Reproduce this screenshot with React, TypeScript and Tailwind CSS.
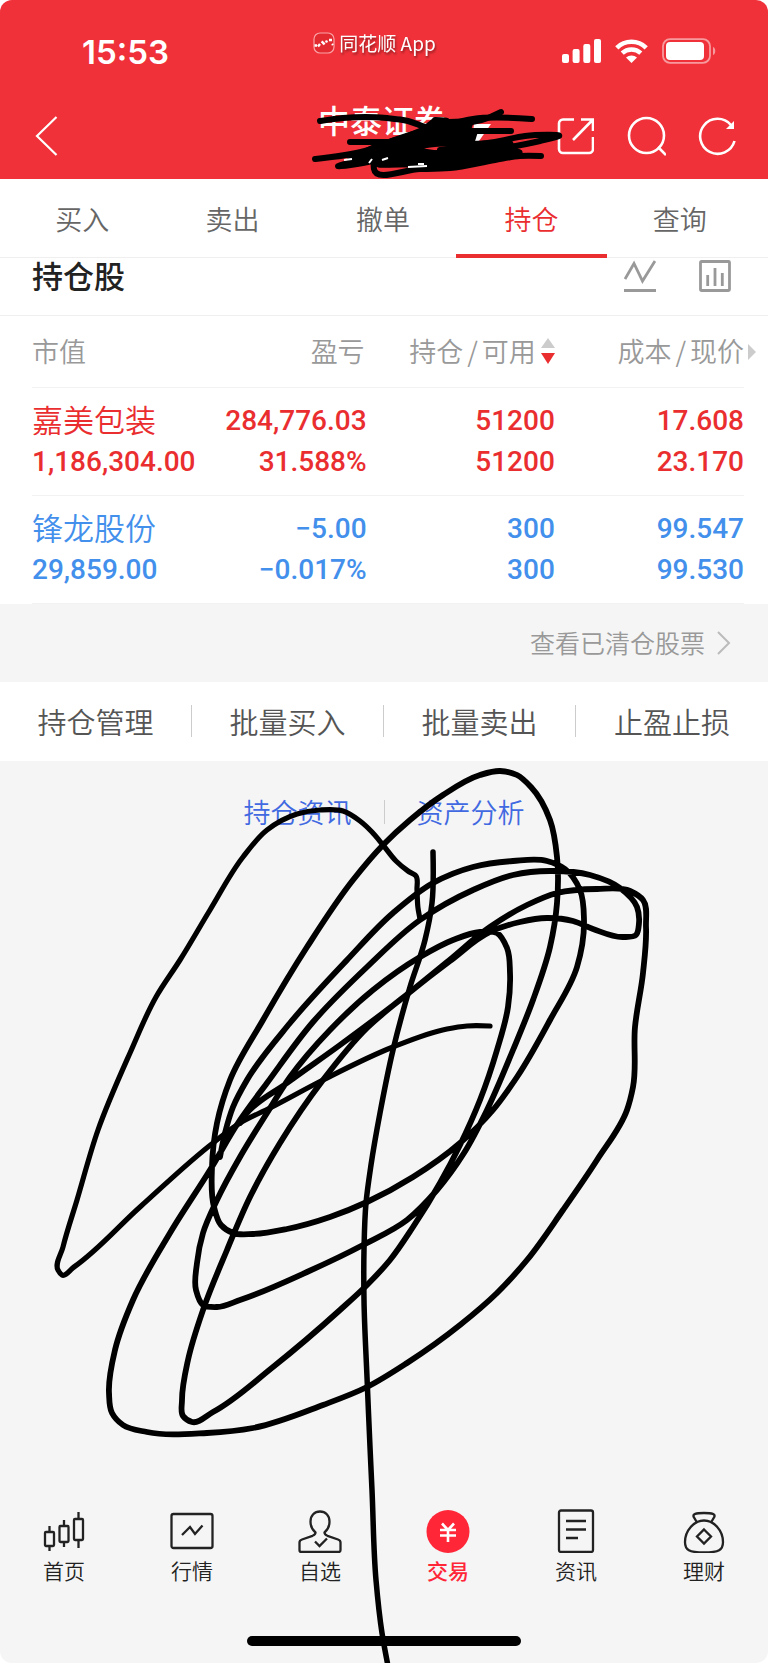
import React from "react";

type Point = [number, number];

const distance = (a: Point, b: Point) => Math.hypot(b[0] - a[0], b[1] - a[1]) || 1;

/* Direction of the pen at b, weighted by how far away its neighbours are. */
function tangent(a: Point, b: Point, c: Point): Point {
  const m = distance(a, b);
  const n = distance(b, c);
  const along = (k: 0 | 1) => (((b[k] - a[k]) / m) * n + ((c[k] - b[k]) / n) * m) / (m + n);
  return [along(0), along(1)];
}

/* Turns a list of pen positions into a smooth curve. */
function smooth(p: Point[]): string {
  let d = `M${p[0][0]} ${p[0][1]}`;
  for (let i = 0; i < p.length - 1; i++) {
    const b = p[i];
    const c = p[i + 1];
    const s = tangent(p[i - 1] ?? b, b, c);
    const e = tangent(b, c, p[i + 2] ?? c);
    const third = distance(b, c) / 3;
    d += ` C${b[0] + s[0] * third} ${b[1] + s[1] * third} ${c[0] - e[0] * third} ${c[1] - e[1] * third} ${c[0]} ${c[1]}`;
  }
  return d;
}

const tail: Point[] = [
  [433, 852], [432, 903], [425, 940], [410, 987], [393, 1050], [380, 1113], [371, 1165], [366, 1203], [364, 1250],
  [364, 1300], [367, 1377], [370, 1447], [372, 1490], [376, 1580], [382, 1633], [388, 1666],
];

const leftLobe: Point[] = [
  [420, 919], [418, 908], [417, 890], [416, 876], [408, 871], [396, 861], [383, 845], [372, 832], [360, 821], [343, 811], [320, 810],
  [297, 814], [267, 830], [243, 857], [210, 910], [180, 960], [156, 997], [130, 1053], [98, 1130], [77, 1200],
  [63, 1247], [58, 1270], [62, 1275], [74, 1267], [140, 1207], [213, 1143], [240, 1123], [270, 1108], [323, 1080],
  [393, 1047], [447, 1029], [467, 1026], [490, 1026],
];

const loops: Point[] = [
  [240, 1123], [247, 1113], [287, 1083], [340, 1045], [400, 1000], [447, 962], [490, 927], [527, 905], [557, 893],
  [597, 889], [630, 891], [643, 900], [646, 927], [643, 973], [635, 1027], [633, 1087], [627, 1110], [597, 1160],
  [563, 1210], [527, 1260], [497, 1293], [460, 1325], [407, 1363], [367, 1387], [323, 1405], [253, 1428], [207, 1433],
  [147, 1432], [123, 1425], [112, 1413], [109, 1393], [115, 1350], [133, 1300], [170, 1233], [210, 1170],
  [240, 1120], [267, 1083], [313, 1022], [367, 967], [420, 920], [473, 890], [513, 875], [550, 871], [590, 875],
  [620, 888], [637, 907], [639, 923], [636, 935], [623, 937], [593, 929], [573, 921], [547, 918], [520, 922],
  [490, 932], [450, 961], [410, 992], [367, 1028], [323, 1080], [280, 1143], [250, 1197], [227, 1250], [203, 1310],
  [188, 1360], [182, 1400], [183, 1416], [192, 1422], [213, 1412], [273, 1367], [340, 1310], [367, 1285],
  [390, 1260], [413, 1227], [440, 1183], [460, 1145], [480, 1100], [497, 1050], [508, 1007], [510, 973], [507, 948],
  [497, 933], [480, 932], [453, 940], [420, 957], [373, 990], [330, 1030], [290, 1077], [267, 1113], [240, 1157],
  [217, 1200], [203, 1233], [197, 1263], [196, 1290], [203, 1305], [217, 1307], [240, 1300], [307, 1272],
  [363, 1245], [407, 1220], [437, 1190], [464, 1153], [487, 1110], [513, 1050], [533, 1000], [550, 947], [557, 903],
  [557, 857], [550, 820], [531, 787], [517, 775], [500, 771], [480, 775], [443, 795], [410, 820], [383, 845],
  [353, 880], [307, 947], [263, 1020], [230, 1080], [217, 1123], [212, 1167], [214, 1207], [221, 1225], [233, 1233],
  [253, 1234], [287, 1229], [330, 1217], [367, 1202], [413, 1177], [460, 1143], [493, 1110], [517, 1077],
  [550, 1020], [577, 967], [584, 920], [580, 890], [565, 869], [547, 861], [513, 861], [473, 867], [433, 883],
  [393, 913], [347, 960], [290, 1023], [247, 1080], [233, 1107], [225, 1133], [220, 1157],
];

const titleStrokes: Point[][] = [
  [[320, 121], [343, 118], [387, 118], [408, 121], [425, 127], [450, 132], [470, 141]],
  [[501, 112], [485, 119], [460, 124], [433, 127], [405, 137], [375, 147], [352, 158]],
  [[532, 119], [473, 119], [440, 127], [400, 138], [365, 151], [315, 159]],
  [[511, 131], [470, 131], [440, 132], [410, 142], [380, 152], [350, 160]],
  [[350, 142], [385, 142], [430, 143], [470, 144], [510, 144], [490, 151], [430, 154], [395, 155]],
  [[435, 120], [447, 121], [425, 131], [395, 145], [365, 158], [338, 166], [372, 161], [400, 150], [445, 143]],
  [[475, 131], [471, 144]],
  [[440, 150], [500, 141], [525, 136], [559, 136], [540, 141], [510, 147], [450, 154], [385, 154], [374, 162], [374, 169], [420, 169], [450, 168], [495, 160], [520, 156], [541, 156]],
  [[388, 153], [440, 157], [500, 150], [519, 152], [480, 157], [400, 161], [380, 164], [440, 162], [500, 157]],
];

function Scribble() {
  return (
    <svg className="pointer-events-none absolute inset-x-0 top-0 w-full" viewBox="0 0 768 1663" fill="none" aria-hidden="true">
      <path d="M474 124h17l-12 17h-7z" fill="#fff" />
      <path d="M432 119h17l26-1-4 12 2 12-28-1-24 9-40 3-14 8 36-19zM378 152l52-1 66-9 20 2 4 10-26 7-54 7-64-1-4-8z" fill="#000" />
      <g stroke="#000" strokeLinecap="round" strokeLinejoin="round">
        <path d={smooth(tail)} strokeWidth="5.500" />
        <path d={smooth(leftLobe)} strokeWidth="5.200" />
        <path d={smooth(loops)} strokeWidth="5.800" />
        {titleStrokes.map((s, i) => (
          <path key={i} d={smooth(s)} strokeWidth="6" />
        ))}
      </g>
      <path d="M344 160l8-1M369 163l3-4M382 160l6-2M408 167l19-1M418 164h6" stroke="#fff" strokeWidth="2" />
    </svg>
  );
}

function StatusBar() {
  return (
    <div className="grid grid-cols-3 px-[52px] pt-7 text-white">
      <div className="pl-[30px] pt-1 font-[Inter,sans-serif] text-[33px] font-semibold leading-[40px]">15:53</div>
      <div className="flex h-[30px] items-center gap-1 pl-10 text-[19px] whitespace-nowrap">
        <svg className="h-[22px] w-[22px]" viewBox="0 0 22 22" fill="none" aria-hidden="true">
          <rect x="1" y="1" width="20" height="20" rx="6" fill="#e22a30" stroke="#f9a3a6" strokeWidth="1.200" />
          <path d="M1.500 13.500h2.500M5 14.500l2-2.500M8.500 9.500l1.500 1M10 12.500l1.500-2M13 10.500l1-2M16 8h3M19 12l1 1" stroke="#fff" strokeWidth="2.400" />
        </svg>
        <span className="drop-shadow-[1px_2px_1px_rgba(0,0,0,0.4)]">同花顺 App</span>
      </div>
      <div className="flex h-[46px] items-center justify-end gap-[14px]">
        <svg className="h-6 w-[39px]" viewBox="0 0 39 24" fill="#fff" aria-hidden="true">
          <rect y="15" width="7" height="9" rx="2" />
          <rect x="10.6" y="10" width="7" height="14" rx="2" />
          <rect x="21.3" y="5" width="7" height="19" rx="2" />
          <rect x="32" width="7" height="24" rx="2" />
        </svg>
        <svg className="h-6 w-[33px]" viewBox="0 0 33 24" fill="none" aria-hidden="true">
          <path d="M1.8 8.8a21 21 0 0 1 29.4 0" stroke="#fff" strokeWidth="4.6" />
          <path d="M7.2 14.2a13.5 13.5 0 0 1 18.6 0" stroke="#fff" strokeWidth="4.4" />
          <path d="M11 18.600a8 8 0 0 1 11 0L16.500 24z" fill="#fff" />
        </svg>
        <svg className="h-[26px] w-[54px]" viewBox="0 0 54 26" fill="none" aria-hidden="true">
          <rect x="1" y="1.200" width="47" height="23.600" rx="7" stroke="#f79a9e" strokeWidth="1.800" />
          <rect x="4" y="4" width="38" height="18" rx="4" fill="#fff" />
          <path d="M51 9c3 1 3 7 0 8z" fill="#f79a9e" />
        </svg>
      </div>
    </div>
  );
}

function NavBar() {
  return (
    <div className="flex items-start justify-between pl-[34px] pr-8 pt-[30px] text-white">
      <button type="button" aria-label="返回" className="flex w-[190px] pt-3">
        <svg className="h-10 w-6" viewBox="0 0 24 40" fill="none" stroke="#fff" strokeWidth="2.200">
          <path d="M22.500 1L3 20l19.500 19" />
        </svg>
      </button>
      <h1 className="mr-4 text-[32px] font-medium leading-[30px]">中泰证券</h1>
      <div className="flex gap-[32px] pt-3">
        <button type="button" aria-label="分享">
          <svg className="h-10 w-[38px]" viewBox="1 0 38 40" fill="none" stroke="#fff" strokeWidth="2.600">
            <path d="M19 3.500H8a4 4 0 0 0-4 4V33a4 4 0 0 0 4 4h26a4 4 0 0 0 4-4V21M26 3.500h12V15M38 3.500L18 24" />
          </svg>
        </button>
        <button type="button" aria-label="搜索">
          <svg className="h-10 w-10" viewBox="0 0 40 40" fill="none" stroke="#fff" strokeWidth="2.600">
            <circle cx="20.500" cy="19.500" r="17.500" />
            <path d="M32 31l8 8" />
          </svg>
        </button>
        <button type="button" aria-label="刷新">
          <svg className="h-10 w-[38px]" viewBox="0 0 38 40" fill="none" stroke="#fff" strokeWidth="2.600">
            <path d="M36.500 25A17.500 17.500 0 1 1 33 9" />
            <path d="M36 5v8h-8z" fill="#fff" stroke="none" />
          </svg>
        </button>
      </div>
    </div>
  );
}

const tabs = ["买入", "卖出", "撤单", "持仓", "查询"];

function Tabs() {
  return (
    <nav className="flex h-[79px] border-b border-[#efefef] bg-white pl-[7px] pr-[13px] text-[27px] font-[350] text-[#666]">
      {tabs.map((t) => (
        <a
          key={t}
          href="#"
          className={
            t === "持仓"
              ? "-mx-[2px] -mb-px flex flex-1 items-center justify-center border-b-4 border-[#ea2e30] pt-[6px] text-[#ea2e30]"
              : "-mb-px flex flex-1 items-center justify-center border-b-4 border-transparent pt-[6px]"
          }
        >
          {t}
        </a>
      ))}
    </nav>
  );
}

function Heading() {
  return (
    <div className="flex h-[58px] items-start justify-between border-b border-[#efefef] pl-8 pr-[37px]">
      <h2 className="text-[31px] font-medium leading-[34px] text-[#222]">持仓股</h2>
      <div className="flex gap-[43px] pt-[2px]">
        <button type="button" aria-label="走势">
          <svg className="h-8 w-8" viewBox="0 0 32 32" fill="none" stroke="#999" strokeWidth="2.800">
            <path d="M1 19l9-15.500L18.500 21 31 1M0 30.500h32" />
          </svg>
        </button>
        <button type="button" aria-label="统计">
          <svg className="h-8 w-8" viewBox="0 0 32 32" fill="none" stroke="#999" strokeWidth="2.800">
            <rect x="1.500" y="1.500" width="29" height="29" rx="1" />
            <path d="M8.700 15v11M16 8v18M23.300 13v13" />
          </svg>
        </button>
      </div>
    </div>
  );
}

const rows = [
  { name: "嘉美包装", value: "1,186,304.00", cols: [["284,776.03", "31.588%"], ["51200", "51200"], ["17.608", "23.170"]], up: true },
  { name: "锋龙股份", value: "29,859.00", cols: [["−5.00", "−0.017%"], ["300", "300"], ["99.547", "99.530"]], up: false },
];

function Holdings() {
  return (
    <div className="pl-8 pr-6">
      <table className="w-full table-fixed border-collapse">
        <colgroup>
          <col className="w-[24%]" />
          <col className="w-[23%]" />
          <col className="w-[27%]" />
          <col className="w-[26%]" />
        </colgroup>
        <thead>
          <tr className="h-[71px] border-b border-[#f2f2f2] text-right text-[27px] leading-[38px] text-[#999]">
            <th className="text-left font-[350]">市值</th>
            <th className="pr-[2px] font-[350]">盈亏</th>
            <th className="pr-1 font-[350] whitespace-nowrap">
              <span className="inline-flex items-center gap-[5px]">
                <span>
                  持仓<span className="mx-1">/</span>可用
                </span>
                <svg className="h-[26px] w-[14px]" viewBox="0 0 14 26" aria-hidden="true">
                  <path d="M7 0l7 10H0z" fill="#ccc" />
                  <path d="M7 26l7-11H0z" fill="#ea2e30" />
                </svg>
              </span>
            </th>
            <th className="relative font-[350] whitespace-nowrap">
              成本<span className="mx-1">/</span>现价
              <svg className="absolute -right-3 top-7 h-4 w-2" viewBox="0 0 8 16" aria-hidden="true">
                <path d="M0 0l8 8-8 8z" fill="#ccc" />
              </svg>
            </th>
          </tr>
        </thead>
        <tbody>
          {rows.map((r) => (
            <tr
              key={r.name}
              className={
                r.up
                  ? "h-[108px] border-b border-[#f2f2f2] text-right text-[28px] font-medium leading-[41px] text-[#ea2e30]"
                  : "h-[108px] border-b border-[#f2f2f2] text-right text-[28px] font-medium leading-[41px] text-[#438fec]"
              }
            >
              <td className="text-left whitespace-nowrap">
                <div className="pb-1 text-[31px] font-[350] leading-[37px]">{r.name}</div>
                <div className="font-[Roboto,sans-serif]">{r.value}</div>
              </td>
              {r.cols.map((c, i) => (
                <td key={i} className={i === 1 ? "pr-1 font-[Roboto,sans-serif] whitespace-nowrap" : "font-[Roboto,sans-serif] whitespace-nowrap"}>
                  <div>{c[0]}</div>
                  <div>{c[1]}</div>
                </td>
              ))}
            </tr>
          ))}
        </tbody>
      </table>
    </div>
  );
}

const actions = ["持仓管理", "批量买入", "批量卖出", "止盈止损"];

function TabIcon({ name }: { name: string }) {
  const common = { className: "h-11 w-11", viewBox: "0 0 44 44", fill: "none", stroke: "#222", strokeWidth: 2.3 };
  switch (name) {
    case "首页":
      return (
        <svg {...common}>
          <rect x="3" y="23" width="9" height="14" rx="1" />
          <rect x="17.500" y="17" width="9" height="16" rx="1" />
          <rect x="32" y="10" width="9" height="21" rx="1" />
          <path d="M7.500 17v6m0 14v5M22 11v6m0 16v5M36.500 3v7m0 21v8" />
        </svg>
      );
    case "行情":
      return (
        <svg {...common}>
          <rect x="1.500" y="5" width="41" height="34" rx="2" />
          <path d="M12 26l8-8 5 7 7.500-8.500" />
        </svg>
      );
    case "自选":
      return (
        <svg {...common}>
          <path d="M17.500 23.500c-3-2.500-5-6-5-11 0-6 4-10 9.500-10s9.500 4 9.500 10c0 5-2 8.500-5 11 0 2 1 2.500 3 3.300L40 30.500c2 .7 2.500 1.500 2.500 3V41c0 1.500-.5 2-2 2h-37c-1.500 0-2-.5-2-2v-7.500c0-1.500.5-2.300 2.500-3l10.500-3.700c2-.8 3-1.300 3-3.300z" />
          <path d="M17 32.500l4.500 4.500 7.500-7.500" />
        </svg>
      );
    case "交易":
      return (
        <svg {...common}>
          <circle cx="22" cy="22.500" r="21.500" fill="#ff2638" stroke="none" />
          <path d="M16 14.500l6 6.500 6-6.500M14 21h16M14 26.500h16M22 20.500V33" stroke="#fff" strokeWidth="2.600" />
        </svg>
      );
    case "资讯":
      return (
        <svg {...common}>
          <rect x="5" y="1.500" width="34" height="41.500" rx="2" />
          <path d="M12 12h20M12 20.500h20M12 29h12" />
        </svg>
      );
    default:
      return (
        <svg {...common}>
          <path d="M15 13.500l-3.500-6C11 5 13 4 22 4s11 1 10.500 3.500l-3.500 6" />
          <path d="M22 11.500c-10 0-19 10-19 21.500 0 8 4 10.500 19 10.500s19-2.500 19-10.500c0-11.500-9-21.500-19-21.500z" />
          <path d="M22 20.500l7 7-7 7-7-7z" />
        </svg>
      );
  }
}

const bottomTabs = ["首页", "行情", "自选", "交易", "资讯", "理财"];

export default function App() {
  return (
    <div className="bg-white">
      <main className="relative flex min-h-screen flex-col overflow-hidden rounded-xl bg-[#f5f5f5] font-['Noto_Sans_CJK_SC',sans-serif]">
        <header className="h-[179px] bg-[#f03139]">
          <StatusBar />
          <NavBar />
        </header>
        <Tabs />
        <section className="bg-white">
          <Heading />
          <Holdings />
        </section>
        <div className="flex h-[78px] items-center justify-end pr-[37px]">
          <a href="#" className="flex items-center gap-3 text-[25px] font-[350] text-[#999]">
            查看已清仓股票
            <svg className="h-6 w-[14px]" viewBox="0 0 14 24" fill="none" stroke="#bbb" strokeWidth="2" aria-hidden="true">
              <path d="M1 1l11 11L1 23" />
            </svg>
          </a>
        </div>
        <div className="grid h-[79px] grid-cols-4 items-center divide-x divide-[#ccc] bg-white text-[29px] font-[350] text-[#555]">
          {actions.map((a) => (
            <button key={a} type="button" className="h-8 leading-8 whitespace-nowrap">
              {a}
            </button>
          ))}
        </div>
        <div className="flex items-center justify-center gap-8 pt-[31px] text-[27px] font-[350] leading-[40px] text-[#4169e1]">
          <a href="#">持仓资讯</a>
          <span className="h-6 w-px bg-[#ccc]" />
          <a href="#">资产分析</a>
        </div>
        <nav className="mt-auto grid grid-cols-6 text-[21px] leading-[30px] text-[#222]">
          {bottomTabs.map((t) => (
            <a
              key={t}
              href="#"
              className={t === "交易" ? "flex flex-col items-center gap-[2px] font-medium text-[#ff2638]" : "flex flex-col items-center gap-[2px] font-[350]"}
            >
              <TabIcon name={t} />
              {t}
            </a>
          ))}
        </nav>
        <div className="mx-auto mb-[17px] mt-[51px] h-[10px] w-[274px] rounded-full bg-black" />
        <Scribble />
      </main>
    </div>
  );
}
